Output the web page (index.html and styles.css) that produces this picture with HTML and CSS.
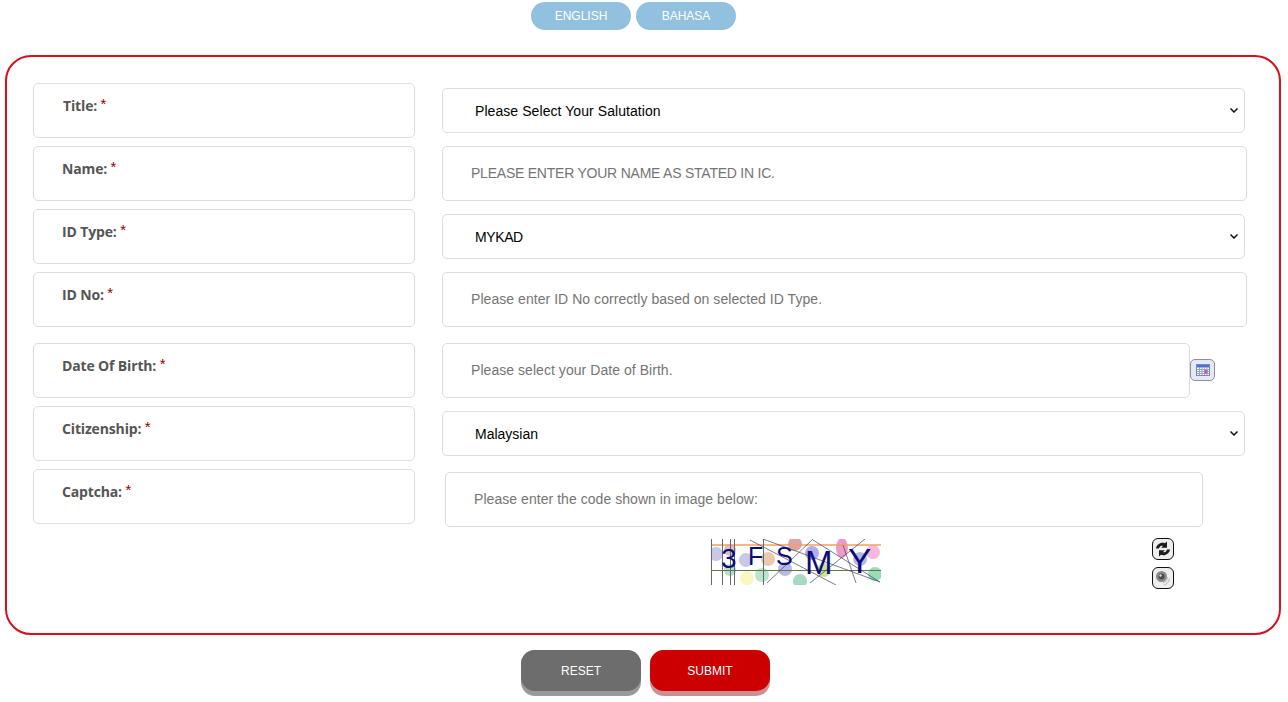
FILE: index.html
```html
<!DOCTYPE html>
<html>
  <head>
    <title>Registration</title>
    <meta charset="UTF-8" />
    <link rel="stylesheet" href="styles.css">
  </head>

  <body>
    <div class="lang">
      <a class="lang_btn">ENGLISH</a>
      <a class="lang_btn">BAHASA</a>
    </div>

    <form class="card">
      <div class="row">
        <div class="label">Title: <span class="req">*</span></div>
        <div class="field field_sel">
          <select class="select select_title"><option>Please Select Your Salutation</option></select>
        </div>
      </div>
      <div class="row">
        <div class="label label_b">Name: <span class="req">*</span></div>
        <div class="field">
          <input class="input input_name" type="text" placeholder="PLEASE ENTER YOUR NAME AS STATED IN IC.">
        </div>
      </div>
      <div class="row">
        <div class="label label_b">ID Type: <span class="req">*</span></div>
        <div class="field field_sel">
          <select class="select select_id"><option>MYKAD</option></select>
        </div>
      </div>
      <div class="row row_wide">
        <div class="label label_b">ID No: <span class="req">*</span></div>
        <div class="field">
          <input class="input" type="text" placeholder="Please enter ID No correctly based on selected ID Type.">
        </div>
      </div>
      <div class="row">
        <div class="label label_b">Date Of Birth: <span class="req">*</span></div>
        <div class="field field_date">
          <input class="input input_date" type="text" placeholder="Please select your Date of Birth.">
          <button class="cal" type="button">
            <svg width="14" height="12" viewBox="0 0 14 12">
              <rect x="0.5" y="0.5" width="13" height="11" fill="#fff" stroke="#7088cc"/>
              <rect x="1" y="1" width="12" height="2.500" fill="#4f6fd0"/>
              <path d="M1 5.500H13M1 7.500H13M1 9.500H13M3.500 3V11M6 3V11M8.500 3V11M11 3V11" stroke="#8fa3dc" stroke-width="1" fill="none"/>
              <rect x="8.500" y="6" width="3" height="3.500" fill="#e2603f"/>
            </svg>
          </button>
        </div>
      </div>
      <div class="row">
        <div class="label label_b">Citizenship: <span class="req">*</span></div>
        <div class="field field_sel">
          <select class="select"><option>Malaysian</option></select>
        </div>
      </div>
      <div class="row">
        <div class="label label_b">Captcha: <span class="req">*</span></div>
        <div class="field field_cap">
          <input class="input input_cap" type="text" placeholder="Please enter the code shown in image below:">
          <div class="cap_row">
            <svg class="cap_img" width="170" height="46" viewBox="0 0 170 46">
              <!-- dots -->
              <g opacity="0.6">
                <circle cx="5" cy="15" r="7" fill="#a5a5dc"/>
                <circle cx="35" cy="21" r="7" fill="#a5a5dc"/>
                <circle cx="19" cy="11" r="6" fill="#c09a9a"/>
                <circle cx="19" cy="31" r="6" fill="#8acb9a"/>
                <circle cx="36" cy="39" r="7" fill="#f6f29a"/>
                <circle cx="51" cy="36" r="7" fill="#8ad4a5"/>
                <circle cx="57" cy="20" r="7" fill="#dba87a"/>
                <circle cx="74" cy="30" r="7" fill="#8a8ad4"/>
                <circle cx="84" cy="5" r="7" fill="#c46a6a"/>
                <circle cx="89" cy="42" r="7" fill="#6ac49a"/>
                <circle cx="101" cy="14" r="7" fill="#7a7adb"/>
                <circle cx="113" cy="31" r="7" fill="#a8d44a"/>
                <ellipse cx="131" cy="9" rx="6" ry="10" fill="#e05aa5"/>
                <circle cx="149" cy="20" r="7" fill="#8a8ad4"/>
                <circle cx="162" cy="13" r="7" fill="#f48ac8"/>
                <circle cx="164" cy="35" r="7" fill="#5ac48a"/>
              </g>
              <!-- lines -->
              <path d="M0 6H170" stroke="#f0a060" stroke-width="1.500" fill="none"/>
              <path d="M0 31.500H170" stroke="#5a7a4a" stroke-width="1" fill="none"/>
              <path d="M0.500 0V46M11.500 0V46M19.500 0V46M23.500 0V46M52.500 0V46" stroke="#667" stroke-width="1" fill="none"/>
              <path d="M39 1L125 46M52 0L169 43M56 44L102 0M99 44L154 0M102 1L169 43M132 6L145 44" stroke="#446" stroke-width="0.700" fill="none"/>
              <text x="10" y="29" class="cap_text cap_3">3</text>
              <text x="37" y="26" class="cap_text cap_f">F</text>
              <text x="65" y="26" class="cap_text cap_f">S</text>
              <text x="94" y="35" class="cap_text cap_m">M</text>
              <text x="137" y="34" class="cap_text cap_y">Y</text>
            </svg>
            <div class="cap_btns">
              <button class="cap_btn" type="button">
                <svg width="18" height="18" viewBox="0 0 18 18">
                  <path d="M2 8.500C2.500 4.500 7 1.500 11 3.200L13 1.500V7.800H7L9 6C7 5.200 5.500 6.500 5 8.500Z" fill="#1c1c1c"/>
                  <path d="M16 9.500C15.500 13.500 11 16.500 7 14.800L5 16.500V10.200H11L9 12C11 12.800 12.500 11.500 13 9.500Z" fill="#1c1c1c"/>
                </svg>
              </button>
              <button class="cap_btn" type="button">
                <svg width="18" height="18" viewBox="0 0 18 18">
                  <circle cx="7.500" cy="7.500" r="5.500" fill="#8c8c8c"/>
                  <circle cx="7.500" cy="7.500" r="3" fill="#4a4a4a"/>
                  <circle cx="6.500" cy="6.500" r="1.200" fill="#ddd"/>
                  <path d="M13.500 8.500C13.500 11 11.500 13 9 14M15.500 9.500C15 13 13 15 10 16" stroke="#b5b5b5" stroke-width="1" fill="none"/>
                </svg>
              </button>
            </div>
          </div>
        </div>
      </div>
    </form>

    <div class="actions">
      <button class="action action_reset" type="button"><span class="action_face">RESET</span></button>
      <button class="action action_submit" type="button"><span class="action_face">SUBMIT</span></button>
    </div>
  </body>
</html>
```

FILE: styles.css
```css
html {
  height: 100%;
  overflow: hidden;
}
body {
  margin: 0;
  font-family: "Liberation Sans", Arial, sans-serif;
  background: #fff;
}
.lang {
  display: flex;
  gap: 5px;
  padding: 2px 0 0 531px;
}
.lang_btn {
  width: 100px;
  height: 28px;
  line-height: 28px;
  border-radius: 14px;
  background: #92c1e0;
  color: #fff;
  font-size: 12px;
  text-align: center;
}
.card {
  margin: 25px 7px 0 5px;
  padding: 26px 0 44px 26px;
  border: 2px solid #d8101a;
  border-radius: 26px;
}
.row {
  display: grid;
  grid-template-columns: 382px 1fr;
  column-gap: 27px;
  align-items: start;
  margin-bottom: 8px;
}
.row_wide {
  margin-bottom: 16px;
}
.row:last-child {
  margin-bottom: 0;
}
.label {
  box-sizing: border-box;
  height: 55px;
  padding: 14px 0 0 29px;
  border: 1px solid #ddd;
  border-radius: 5px;
  color: #555;
  font-family: "Open Sans", "Liberation Sans", sans-serif;
  font-size: 14px;
  font-weight: 700;
  line-height: 16px;
  letter-spacing: -0.15px;
}
.label_b {
  padding-left: 28px;
}
.req {
  position: relative;
  top: -2px;
  color: #8b0000;
  font-family: "Liberation Sans", Arial, sans-serif;
  font-size: 15px;
  font-weight: 400;
}
.field {
  display: flex;
  min-width: 0;
}
.field_sel {
  padding-top: 5px;
}
.field_date {
  align-items: center;
}
.field_cap {
  display: block;
  padding: 3px 0 0 3px;
}
.select {
  box-sizing: border-box;
  width: 803px;
  height: 45px;
  padding-left: 32px;
  border: 1px solid #ddd;
  border-radius: 5px;
  background: #fff url("data:image/svg+xml,%3Csvg xmlns='http://www.w3.org/2000/svg' width='8' height='5'%3E%3Cpath d='M0.5 0.5L4 4L7.500 0.500' stroke='%23111' stroke-width='1.500' fill='none'/%3E%3C/svg%3E") no-repeat right 6px center;
  appearance: none;
  color: #000;
  font-family: "Liberation Sans", Arial, sans-serif;
  font-size: 14px;
}
.select_title {
  letter-spacing: 0.07px;
}
.select_id {
  letter-spacing: -0.4px;
}
.input {
  box-sizing: border-box;
  width: 805px;
  height: 55px;
  padding: 0 28px 2px;
  border: 1px solid #ddd;
  border-radius: 5px;
  color: #000;
  font-family: "Liberation Sans", Arial, sans-serif;
  font-size: 14px;
  letter-spacing: 0.05px;
}
.input::placeholder {
  color: #757575;
}
.input_name {
  letter-spacing: -0.23px;
}
.input_date {
  width: 748px;
}
.input_cap {
  display: block;
  width: 758px;
}
.cal {
  box-sizing: border-box;
  display: flex;
  align-items: center;
  justify-content: center;
  width: 25px;
  height: 22px;
  margin-bottom: 2px;
  padding: 0;
  border: 1px solid #8a8fa0;
  border-radius: 5px;
  background: #e6e8f2;
}
.cap_row {
  display: flex;
  align-items: flex-start;
  padding: 11px 0 0 266px;
}
.cap_img {
  display: block;
  margin-top: 1px;
}
.cap_text {
  fill: #0b0b7a;
  font-family: "Liberation Sans", Arial, sans-serif;
}
.cap_3 {
  font-size: 28px;
}
.cap_f {
  font-size: 25px;
}
.cap_m {
  font-size: 33px;
}
.cap_y {
  font-size: 35px;
}
.cap_btns {
  display: flex;
  flex-direction: column;
  gap: 7px;
  margin-left: 271px;
}
.cap_btn {
  box-sizing: border-box;
  display: flex;
  align-items: center;
  justify-content: center;
  width: 22px;
  height: 22px;
  padding: 0;
  border: 1px solid #111;
  border-radius: 6px;
  background: #eee;
}
.actions {
  display: flex;
  gap: 9px;
  padding: 15px 0 0 521px;
}
.action {
  width: 120px;
  height: 46px;
  padding: 0;
  border: 0;
  border-radius: 14px;
  color: #fff;
  font-family: "Liberation Sans", Arial, sans-serif;
  font-size: 12px;
}
.action_face {
  display: block;
  height: 41px;
  line-height: 43px;
  margin-bottom: 5px;
  border-radius: 14px;
}
.action_reset {
  background: #999;
}
.action_reset .action_face {
  background: #6e6d6d;
}
.action_submit {
  background: #cc9093;
}
.action_submit .action_face {
  background: #cc0000;
}
```
